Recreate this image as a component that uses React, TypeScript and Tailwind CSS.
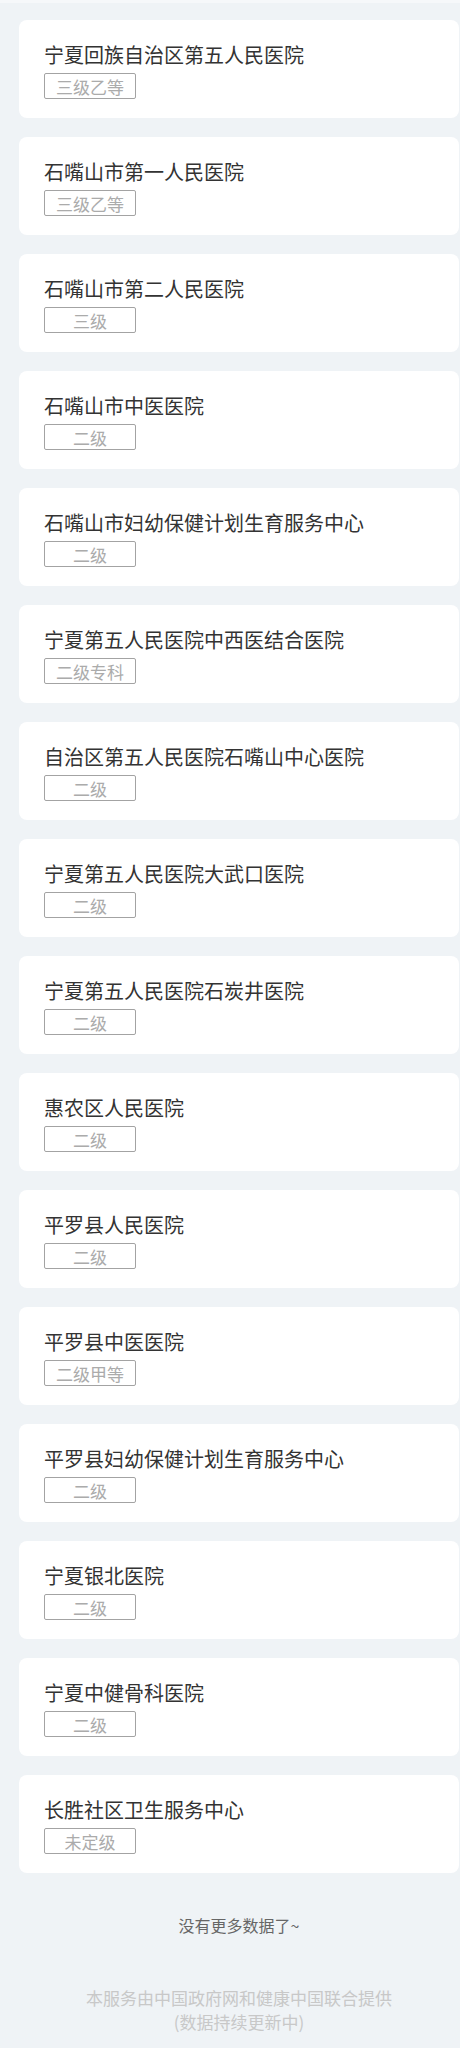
const hospitals = [
  { name: "宁夏回族自治区第五人民医院", level: "三级乙等" },
  { name: "石嘴山市第一人民医院", level: "三级乙等" },
  { name: "石嘴山市第二人民医院", level: "三级" },
  { name: "石嘴山市中医医院", level: "二级" },
  { name: "石嘴山市妇幼保健计划生育服务中心", level: "二级" },
  { name: "宁夏第五人民医院中西医结合医院", level: "二级专科" },
  { name: "自治区第五人民医院石嘴山中心医院", level: "二级" },
  { name: "宁夏第五人民医院大武口医院", level: "二级" },
  { name: "宁夏第五人民医院石炭井医院", level: "二级" },
  { name: "惠农区人民医院", level: "二级" },
  { name: "平罗县人民医院", level: "二级" },
  { name: "平罗县中医医院", level: "二级甲等" },
  { name: "平罗县妇幼保健计划生育服务中心", level: "二级" },
  { name: "宁夏银北医院", level: "二级" },
  { name: "宁夏中健骨科医院", level: "二级" },
  { name: "长胜社区卫生服务中心", level: "未定级" },
];

export default function App() {
  return (
    <div
      className="min-h-screen w-full overflow-hidden bg-[#eff3f6]"
      style={{ fontFamily: '"Noto Sans CJK SC", "Noto Sans", sans-serif' }}
    >
      <div className="h-[3px] bg-[#f6f8fa]" />
      <div className="w-[478px] px-[19px] pt-[17px]">
        <div className="flex flex-col gap-[19px]">
          {hospitals.map((h) => (
            <div key={h.name} className="h-[98px] rounded-[8px] bg-white px-[25px] pt-[20px]">
              <div className="text-[20px] leading-[30px] text-[#333]">{h.name}</div>
              <div className="mt-[3px] flex h-[26px] w-[92px] items-center justify-center rounded-[2px] border border-[#a3a3a3] text-[17px] leading-none text-[#ababab]">
                {h.level}
              </div>
            </div>
          ))}
        </div>
        <div className="pt-[40px] text-center text-[16px] leading-[24px] text-[#666]">没有更多数据了~</div>
        <div className="pt-[49px] text-center text-[17px] leading-[24px] text-[#c8c8c8]">
          <div>本服务由中国政府网和健康中国联合提供</div>
          <div>(数据持续更新中)</div>
        </div>
      </div>
    </div>
  );
}
